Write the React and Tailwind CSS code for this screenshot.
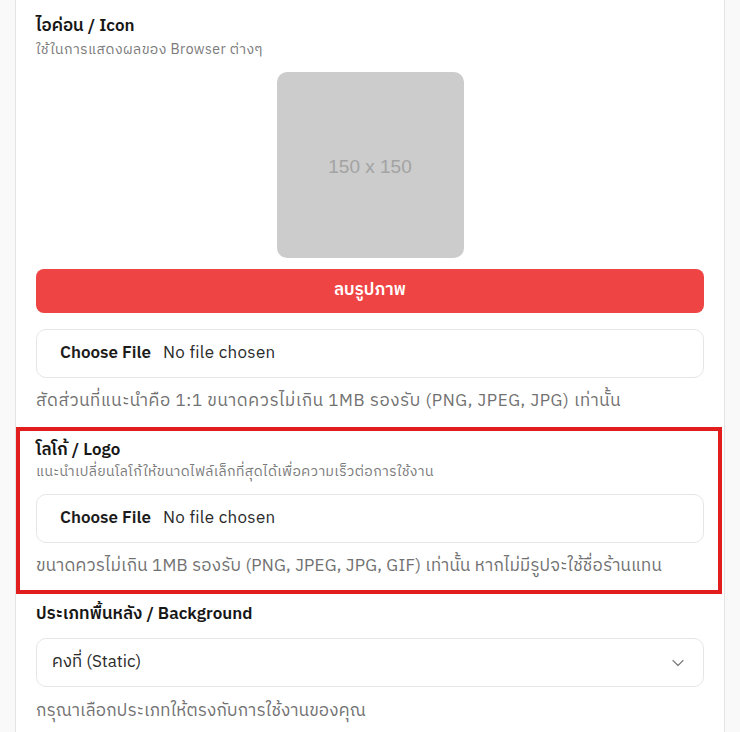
import { ChevronDown } from 'lucide-react';

const font = { fontFamily: '"IBM Plex Sans Thai", "Noto Sans Thai", "Noto Sans", "Noto Sans Thai UI", sans-serif' };

function FileBox() {
    return (
        <div className="h-[49px] w-full rounded-[10px] border border-[#e6e6e6] bg-white flex items-center pl-[23px] text-[17px]">
            <span className="font-semibold text-[#1c1c1c]">Choose File</span>
            <span className="ml-[12px] text-[#2a2a2a] tracking-[0.3px]">No file chosen</span>
        </div>
    );
}

export default function App() {
    return (
        <main className="min-h-screen w-[740px] bg-[#f9f9f9] pl-[15px]" style={font}>
            <div className="w-[710px] min-h-[732px] bg-white border-x border-[#e4e4e4] px-[20px] pt-[15px] pb-[10px]">
                {/* Icon */}
                <div>
                    <h3 className="text-[17px] leading-[22px] font-semibold text-[#161616]">ไอค่อน / Icon</h3>
                    <p className="mt-[4px] text-[14px] leading-[18px] tracking-[0.45px] text-[#7a7a7a]">ใช้ในการแสดงผลของ Browser ต่างๆ</p>
                    <div className="mt-[13px] flex justify-center">
                        <div className="w-[187px] h-[186px] rounded-[10px] bg-[#cccccc] flex items-center justify-center">
                            <span className="mt-[4px] text-[19px] text-[#a3a3a3]" style={{ fontFamily: '"Liberation Sans", Arial, sans-serif' }}>150 x 150</span>
                        </div>
                    </div>
                    <button className="mt-[11px] w-full h-[44px] rounded-[8px] bg-[#ef4444] text-white text-[17px] font-semibold">
                        ลบรูปภาพ
                    </button>
                    <div className="mt-[16px]">
                        <FileBox />
                    </div>
                    <p className="mt-[11px] text-[17px] leading-[24px] tracking-[0.6px] text-[#717171]">
                        สัดส่วนที่แนะนำคือ 1:1 ขนาดควรไม่เกิน 1MB รองรับ (PNG, JPEG, JPG) เท่านั้น
                    </p>
                </div>

                {/* Logo (highlighted) */}
                <div className="mt-[14px] -ml-[20px] -mr-[18px] border-4 border-[#e21d1d] pl-[16px] pr-[14px] pt-[8px] pb-[12px]">
                    <h3 className="text-[17px] leading-[22px] font-semibold text-[#161616]">โลโก้ / Logo</h3>
                    <p className="mt-[2px] text-[14px] leading-[18px] tracking-[0.4px] text-[#7a7a7a]">แนะนำเปลี่ยนโลโก้ให้ขนาดไฟล์เล็กที่สุดได้เพื่อความเร็วต่อการใช้งาน</p>
                    <div className="mt-[13px]">
                        <FileBox />
                    </div>
                    <p className="mt-[11px] text-[17px] leading-[24px] tracking-[0.22px] text-[#717171]">
                        ขนาดควรไม่เกิน 1MB รองรับ (PNG, JPEG, JPG, GIF) เท่านั้น หากไม่มีรูปจะใช้ชื่อร้านแทน
                    </p>
                </div>

                {/* Background */}
                <div className="mt-[8px]">
                    <h3 className="text-[17px] leading-[24px] font-semibold text-[#161616]">ประเภทพื้นหลัง / Background</h3>
                    <div className="mt-[12px] h-[49px] w-full rounded-[10px] border border-[#e6e6e6] bg-white flex items-center justify-between pl-[15px] pr-[15px]">
                        <span className="text-[17px] text-[#2a2a2a]">คงที่ (Static)</span>
                        <ChevronDown size={20} strokeWidth={1.5} className="text-[#808080]" />
                    </div>
                    <p className="mt-[12px] text-[17px] leading-[24px] tracking-[0.22px] text-[#717171]">
                        กรุณาเลือกประเภทให้ตรงกับการใช้งานของคุณ
                    </p>
                </div>
            </div>
        </main>
    );
}
